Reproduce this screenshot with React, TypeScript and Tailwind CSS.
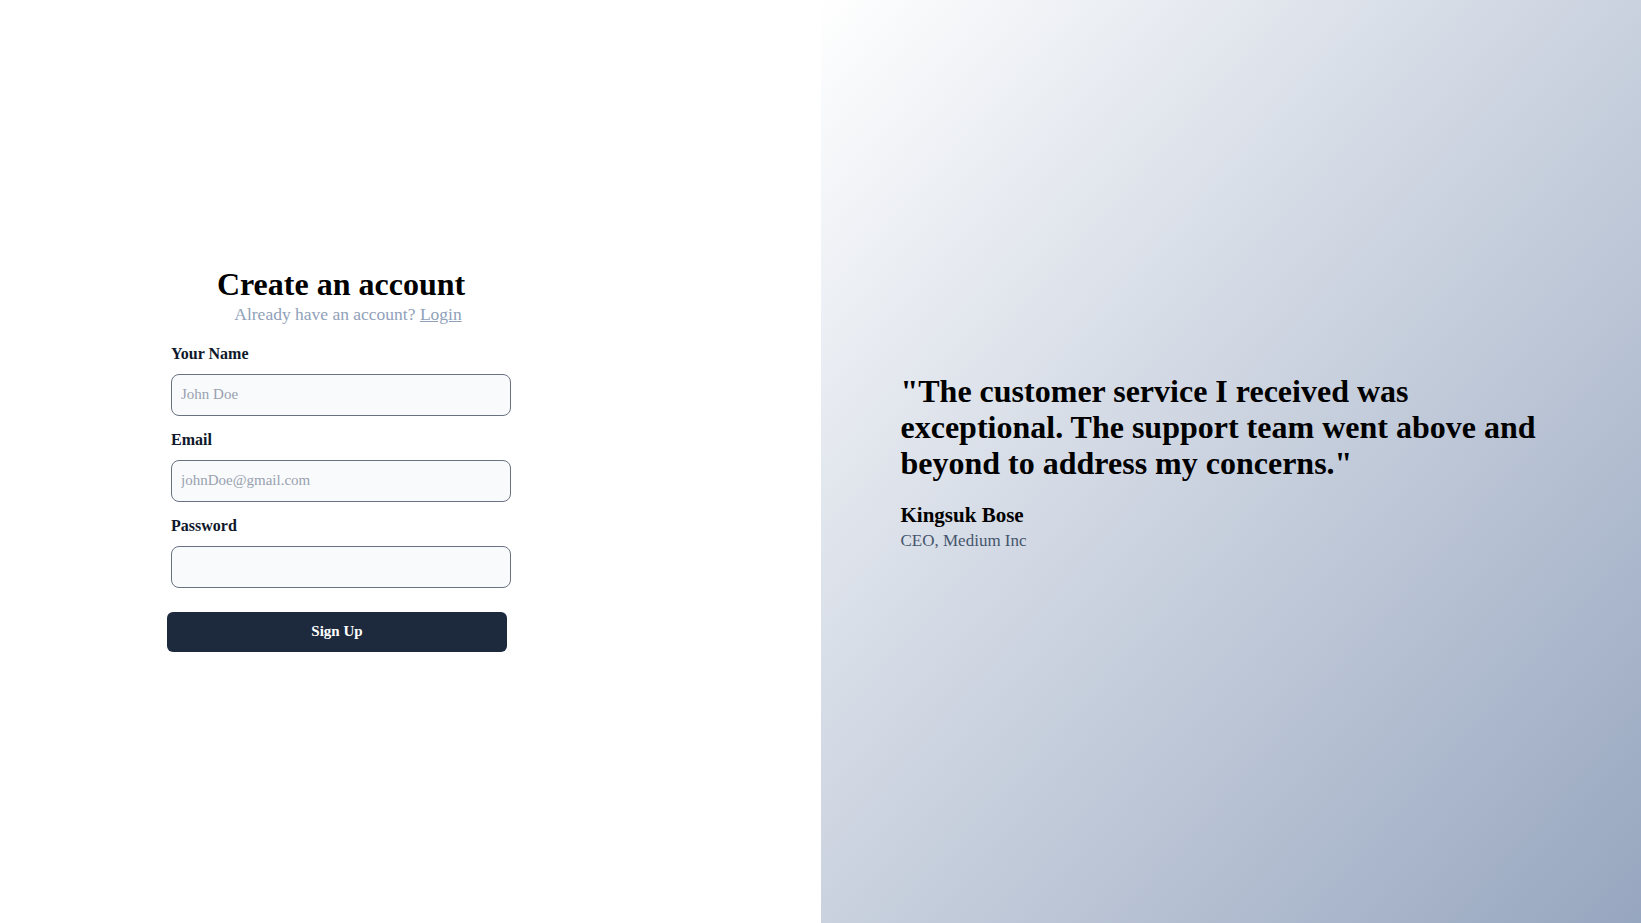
import React from "react";

const serif = "font-['Liberation_Serif','Times_New_Roman',serif]";

function Field({ label, placeholder, type = "text", first = false }: { label: string; placeholder?: string; type?: string; first?: boolean }) {
  return (
    <div className={first ? "" : "mt-3"}>
      <label className="block text-[16px] leading-6 font-semibold text-slate-900">{label}</label>
      <input
        type={type}
        placeholder={placeholder}
        className="mt-2 block h-[42px] w-[340px] rounded-lg border border-gray-500 bg-slate-50 px-[9px] text-[15px] text-slate-900 placeholder:text-gray-400 outline-none"
      />
    </div>
  );
}

export default function App() {
  return (
    <div className={`grid h-screen w-full grid-cols-2 ${serif}`}>
      <div className="flex flex-col justify-center bg-white pb-[6px] pl-[167px]">
        <div className="pl-1">
          <div className="w-[340px] text-center">
            <h1 className="text-[32px] leading-9 font-bold text-black">Create an account</h1>
            <p className="pl-[14px] text-[17.5px] leading-6 text-slate-400">
              Already have an account? <a className="underline" href="#">Login</a>
            </p>
          </div>
          <div className="mt-4">
            <Field label="Your Name" placeholder="John Doe" first />
            <Field label="Email" placeholder="johnDoe@gmail.com" />
            <Field label="Password" type="password" />
          </div>
        </div>
        <button className="mt-6 h-10 w-[340px] rounded-md bg-slate-800 text-[15px] font-semibold text-white">
          Sign Up
        </button>
      </div>
      <div className="flex flex-col justify-center bg-linear-to-br from-white to-[#97a6bf] px-20 pt-[3px]">
        <div>
          <div className="text-[32px] leading-9 font-bold text-black">
            "The customer service I received was exceptional. The support team went above and beyond to address my concerns."
          </div>
          <div className="mt-5 text-[21px] leading-7 font-bold text-black">Kingsuk Bose</div>
          <div className="text-[17px] leading-6 text-slate-600">CEO, Medium Inc</div>
        </div>
      </div>
    </div>
  );
}
